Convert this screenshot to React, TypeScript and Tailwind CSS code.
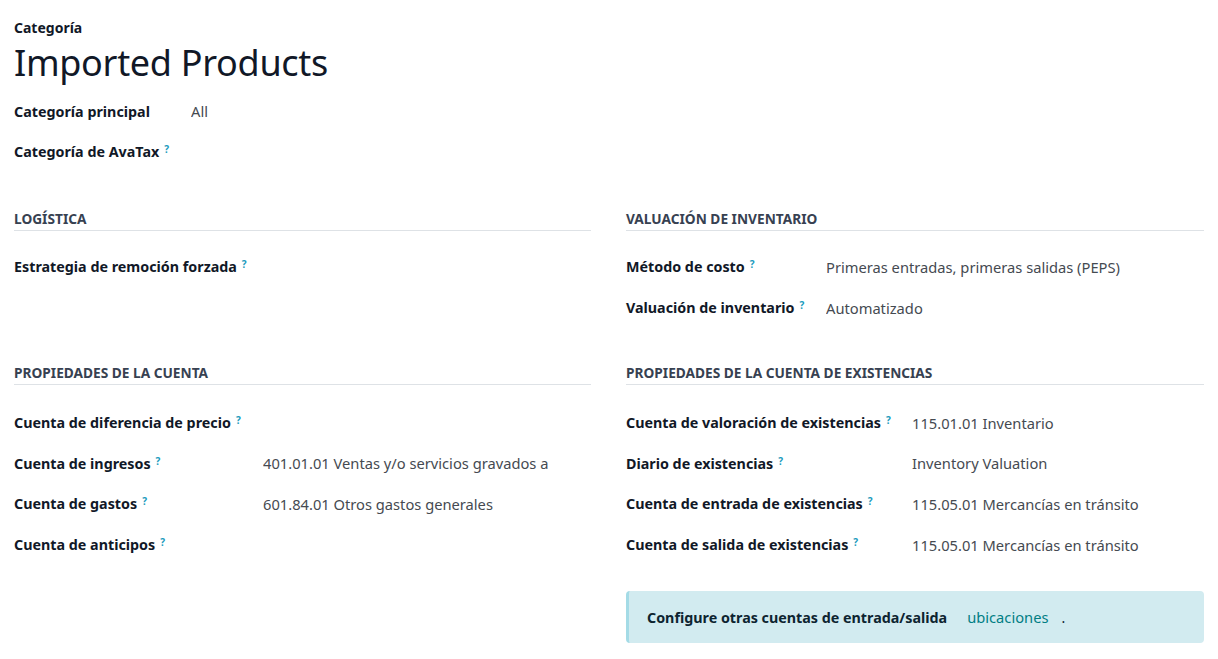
import React from "react";

type Field = { label: string; help?: boolean; value?: string };

const font = "font-['Noto_Sans','DejaVu_Sans',sans-serif]";

function Help() {
  return (
    <sup className="ml-[5px] text-[10px] font-bold text-[#1a9bbd] relative -top-[4px]">?</sup>
  );
}

function Row({ field, labelWidth, valueWidth }: { field: Field; labelWidth: string; valueWidth?: string }) {
  return (
    <div className="flex items-center h-[40.8px]">
      <div className={`${labelWidth} shrink-0 font-bold text-[14.3px] text-[#111827] whitespace-nowrap`}>
        {field.label}
        {field.help && <Help />}
      </div>
      {field.value && (
        <div
          className={`text-[14.7px] text-[#454a51] whitespace-nowrap overflow-hidden ${valueWidth ?? ""}`}
        >
          {field.value}
        </div>
      )}
    </div>
  );
}

function SectionTitle({ children }: { children: React.ReactNode }) {
  return (
    <div className="border-b border-[#dee2e6] pb-[1px] mb-[16px]">
      <h3 className="text-[13.7px] leading-[20px] font-bold text-[#374151] uppercase">{children}</h3>
    </div>
  );
}

export default function App() {
  return (
    <div className={`${font} bg-white w-[1218px] h-[659px] overflow-hidden pl-[14px] pr-[14px] pt-[18px]`}>
      {/* Title */}
      <div className="text-[14px] leading-[20px] font-bold text-[#111827]">Categoría</div>
      <h1 className="text-[36px] leading-[46px] mt-[2px] text-[#111827] tracking-[-0.3px]">Imported Products</h1>

      <div className="mt-[5px]">
        <Row field={{ label: "Categoría principal", value: "All" }} labelWidth="w-[177px]" />
        <Row field={{ label: "Categoría de AvaTax", help: true }} labelWidth="w-[177px]" />
      </div>

      <div className="grid grid-cols-[577px_578px] gap-x-[35px] mt-[36px]">
        {/* Logística */}
        <div>
          <SectionTitle>Logística</SectionTitle>
          <Row field={{ label: "Estrategia de remoción forzada", help: true }} labelWidth="w-[249px]" />
        </div>

        {/* Valuación */}
        <div>
          <SectionTitle>Valuación de inventario</SectionTitle>
          <Row
            field={{ label: "Método de costo", help: true, value: "Primeras entradas, primeras salidas (PEPS)" }}
            labelWidth="w-[200px]"
          />
          <Row
            field={{ label: "Valuación de inventario", help: true, value: "Automatizado" }}
            labelWidth="w-[200px]"
          />
        </div>

        {/* Propiedades de la cuenta */}
        <div className="mt-[35px]">
          <SectionTitle>Propiedades de la cuenta</SectionTitle>
          <div className="pt-[1px]">
            <Row field={{ label: "Cuenta de diferencia de precio", help: true }} labelWidth="w-[249px]" />
            <Row
              field={{ label: "Cuenta de ingresos", help: true, value: "401.01.01 Ventas y/o servicios gravados a" }}
              labelWidth="w-[249px]"
              valueWidth="w-[285px]"
            />
            <Row
              field={{ label: "Cuenta de gastos", help: true, value: "601.84.01 Otros gastos generales" }}
              labelWidth="w-[249px]"
            />
            <Row field={{ label: "Cuenta de anticipos", help: true }} labelWidth="w-[249px]" />
          </div>
        </div>

        {/* Propiedades de existencias */}
        <div className="mt-[35px]">
          <SectionTitle>Propiedades de la cuenta de existencias</SectionTitle>
          <div className="pt-[1px]">
            <Row
              field={{ label: "Cuenta de valoración de existencias", help: true, value: "115.01.01 Inventario" }}
              labelWidth="w-[286px]"
            />
            <Row
              field={{ label: "Diario de existencias", help: true, value: "Inventory Valuation" }}
              labelWidth="w-[286px]"
            />
            <Row
              field={{ label: "Cuenta de entrada de existencias", help: true, value: "115.05.01 Mercancías en tránsito" }}
              labelWidth="w-[286px]"
            />
            <Row
              field={{ label: "Cuenta de salida de existencias", help: true, value: "115.05.01 Mercancías en tránsito" }}
              labelWidth="w-[286px]"
            />
          </div>

          <div className="mt-[26px] h-[52px] flex items-center rounded-[4px] bg-[#d2ebf0] border-l-[3px] border-[#a4dbe6] pl-[18px]">
            <span className="font-bold text-[14.3px] text-[#0d2430]">Configure otras cuentas de entrada/salida</span>
            <span className="ml-[20px] text-[14.7px] text-[#017e84]">ubicaciones</span>
            <span className="ml-[13px] text-[14px] text-[#0d2430]">.</span>
          </div>
        </div>
      </div>
    </div>
  );
}
